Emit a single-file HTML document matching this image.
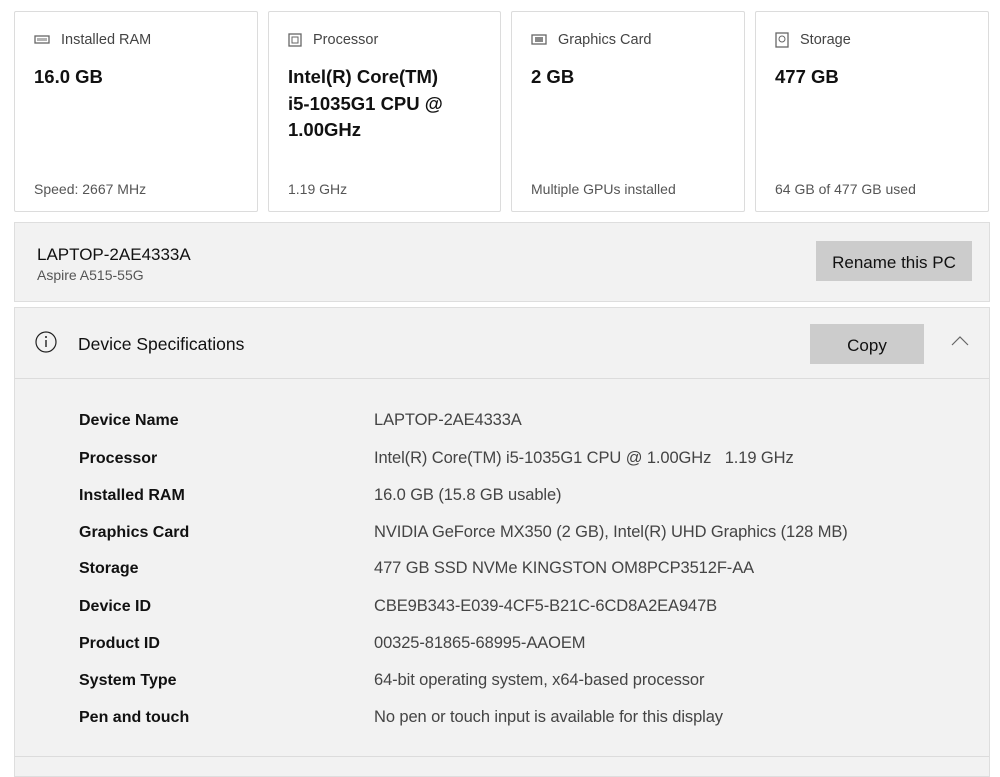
<!DOCTYPE html>
<html><head><meta charset="utf-8"><style>
*{margin:0;padding:0;box-sizing:border-box}
body{width:1000px;height:765px;background:#fff;font-family:"Liberation Sans",sans-serif;position:relative;overflow:hidden;color:#000}
.card{position:absolute;top:11px;height:201px;border:1px solid #dcdcdc;border-radius:2px;background:#fff}
.card .t{position:absolute;left:19px;top:20px;font-size:14.5px;color:#444;display:flex;align-items:center}
.card .t svg{margin-right:11px}
.card .v{position:absolute;left:19px;top:52px;font-size:18.5px;font-weight:bold;line-height:26.5px;color:#111}
.card .s{position:absolute;left:19px;top:169px;font-size:14px;color:#555}
.p1{position:absolute;left:14px;top:222px;width:976px;height:80px;background:#f2f2f2;border:1px solid #dedede}
.p2{position:absolute;left:14px;top:307px;width:976px;height:470px;background:#f2f2f2;border:1px solid #dedede}
.btn{position:absolute;background:#ccc;font-size:17px;color:#111;text-align:center}
.row{position:absolute;left:79px;font-size:16.5px;white-space:nowrap}
.row b{display:inline-block;width:295px;font-weight:bold;color:#111;font-size:16px}
.row span{color:#444;letter-spacing:-0.1px}
</style></head><body>
<div class="card" style="left:14px;width:244px">
 <div class="t"><svg width="16" height="10"><rect x="1" y="1" width="14" height="7" fill="none" stroke="#666" stroke-width="1.3"/><path d="M4 3v3M6 3v3M8 3v3M10 3v3M12 3v3" stroke="#666"/></svg>Installed RAM</div>
 <div class="v">16.0 GB</div><div class="s">Speed: 2667 MHz</div></div>
<div class="card" style="left:268px;width:233px">
 <div class="t"><svg width="14" height="14"><rect x="1" y="1" width="12" height="12" fill="none" stroke="#666" stroke-width="1.3"/><rect x="4" y="4" width="6" height="6" fill="none" stroke="#666"/></svg>Processor</div>
 <div class="v">Intel(R) Core(TM)<br>i5-1035G1 CPU @<br>1.00GHz</div><div class="s">1.19 GHz</div></div>
<div class="card" style="left:511px;width:234px">
 <div class="t"><svg width="16" height="12"><rect x="1" y="1" width="14" height="9" fill="none" stroke="#666" stroke-width="1.3"/><rect x="4" y="3" width="8" height="5" fill="#888"/></svg>Graphics Card</div>
 <div class="v">2 GB</div><div class="s">Multiple GPUs installed</div></div>
<div class="card" style="left:755px;width:234px">
 <div class="t"><svg width="14" height="16"><rect x="1" y="1" width="12" height="14" fill="none" stroke="#666" stroke-width="1.3"/><circle cx="7" cy="7" r="3" fill="none" stroke="#666"/></svg>Storage</div>
 <div class="v">477 GB</div><div class="s">64 GB of 477 GB used</div></div>

<div class="p1">
 <div style="position:absolute;left:22px;top:22px;font-size:17px;color:#111">LAPTOP-2AE4333A</div>
 <div style="position:absolute;left:22px;top:44px;font-size:14px;color:#555">Aspire A515-55G</div>
 <div class="btn" style="left:801px;top:18px;width:156px;height:40px;line-height:43px">Rename this PC</div>
</div>
<div class="p2">
 <svg style="position:absolute;left:20px;top:23px" width="22" height="22"><circle cx="11" cy="11" r="10" fill="none" stroke="#222" stroke-width="1.2"/><path d="M11 9v7" stroke="#222" stroke-width="1.4"/><circle cx="11" cy="6" r="1" fill="#222"/></svg>
 <div style="position:absolute;left:63px;top:26px;font-size:17.5px;color:#111">Device Specifications</div>
 <div class="btn" style="left:795px;top:16px;width:114px;height:40px;line-height:43px">Copy</div>
 <svg style="position:absolute;left:936px;top:27px" width="18" height="12"><path d="M1 10L9 2L17 10" fill="none" stroke="#666" stroke-width="1.2"/></svg>
 <div style="position:absolute;left:0;top:70px;width:100%;border-top:1px solid #dcdcdc"></div>
 <div style="position:absolute;left:0;top:448px;width:100%;border-top:1px solid #dcdcdc"></div>
</div>
<div class="row" style="top:411px"><b>Device Name</b><span>LAPTOP-2AE4333A</span></div>
<div class="row" style="top:449px"><b>Processor</b><span>Intel(R) Core(TM) i5-1035G1 CPU @ 1.00GHz &nbsp; 1.19 GHz</span></div>
<div class="row" style="top:486px"><b>Installed RAM</b><span>16.0 GB (15.8 GB usable)</span></div>
<div class="row" style="top:523px"><b>Graphics Card</b><span>NVIDIA GeForce MX350 (2 GB), Intel(R) UHD Graphics (128 MB)</span></div>
<div class="row" style="top:559px"><b>Storage</b><span>477 GB SSD NVMe KINGSTON OM8PCP3512F-AA</span></div>
<div class="row" style="top:597px"><b>Device ID</b><span>CBE9B343-E039-4CF5-B21C-6CD8A2EA947B</span></div>
<div class="row" style="top:634px"><b>Product ID</b><span>00325-81865-68995-AAOEM</span></div>
<div class="row" style="top:671px"><b>System Type</b><span>64-bit operating system, x64-based processor</span></div>
<div class="row" style="top:708px"><b>Pen and touch</b><span>No pen or touch input is available for this display</span></div>
</body></html>
